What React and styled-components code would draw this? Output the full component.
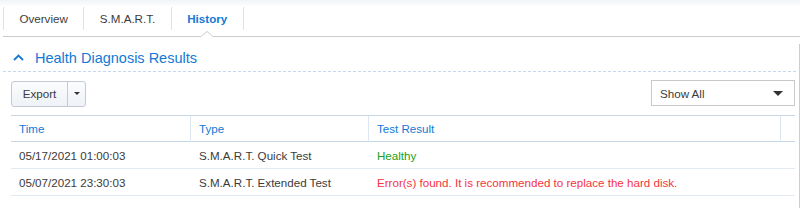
import React, { useState } from 'react'
import styled, { createGlobalStyle } from 'styled-components'

const GlobalStyle = createGlobalStyle`
  html, body {
    margin: 0;
    padding: 0;
    background: #fff;
  }
  body {
    font-family: "Liberation Sans", Arial, sans-serif;
    color: #3b3b3b;
  }
`

const BLUE = '#1379d4'

const Page = styled.div`
  width: 800px;
  height: 208px;
  overflow: hidden;
  background: linear-gradient(#f1f4f8 0, #fff 7px);
`

const TabBar = styled.div`
  display: flex;
  margin-left: 3px;
  padding: 7px 0 6px;
  border-bottom: 1px solid #cbcbcb;
`

const Tab = styled.div`
  position: relative;
  height: 23px;
  padding: 0 15.5px;
  display: flex;
  align-items: center;
  font-size: 11.6px;
  cursor: pointer;
  border-left: 1px solid #dde2e8;
  color: ${({ active }) => (active ? BLUE : '#3b3b3b')};
  font-weight: ${({ active }) => (active ? 'bold' : 'normal')};

  &:last-child {
    border-right: 1px solid #dde2e8;
  }

  ${({ active }) =>
    active &&
    `
    &::before {
      content: '';
      position: absolute;
      left: 50%;
      bottom: -7px;
      margin-left: -7px;
      border: 7px solid transparent;
      border-top: 0;
      border-bottom: 6px solid #cbcbcb;
    }
    &::after {
      content: '';
      position: absolute;
      left: 50%;
      bottom: -7px;
      margin-left: -6px;
      border: 6px solid transparent;
      border-top: 0;
      border-bottom: 5px solid #fff;
    }
  `}
`

const Panel = styled.div`
  margin: 7px 0 0 3px;
  border-right: 1px solid #cdcdcd;
  height: 200px;
`

const SectionHeader = styled.div`
  display: flex;
  align-items: center;
  gap: 11px;
  height: 27px;
  margin-right: 3px;
  padding-left: 10px;
  border-bottom: 1px dashed #c8d8ec;
  color: ${BLUE};
  font-size: 14.5px;
  cursor: pointer;
`

const Body = styled.div`
  padding: 0 4px 0 8px;
`

const Toolbar = styled.div`
  display: flex;
  align-items: center;
  justify-content: space-between;
  height: 43px;
`

const SplitButton = styled.div`
  display: flex;
  height: 26px;
  border: 1px solid #c3cad5;
  border-radius: 3px;
  box-sizing: border-box;
  background: linear-gradient(#fbfcfd, #eff2f6);
  overflow: hidden;
`

const ButtonPart = styled.button`
  border: none;
  background: none;
  font-family: inherit;
  font-size: 11.6px;
  color: #3b3b3b;
  padding: 0;
  width: ${({ w }) => w}px;
  display: flex;
  align-items: center;
  justify-content: center;
  cursor: pointer;

  & + & {
    border-left: 1px solid #c3cad5;
  }
`

const Caret = styled.span`
  width: 0;
  height: 0;
  border-left: ${({ size }) => size}px solid transparent;
  border-right: ${({ size }) => size}px solid transparent;
  border-top: ${({ size }) => size}px solid #333;
`

const Select = styled.div`
  width: 144px;
  height: 26px;
  box-sizing: border-box;
  border: 1px solid #c9c9c9;
  display: flex;
  align-items: center;
  justify-content: space-between;
  padding: 0 11px 0 8px;
  font-size: 11.6px;
  color: #3b3b3b;
  margin-top: -1px;
  cursor: pointer;
`

const Table = styled.div`
  display: grid;
  grid-template-columns: 180px 178px 1fr 14px;
  border-top: 1px solid #c9d6e5;
`

const HeadCell = styled.div`
  height: 25px;
  display: flex;
  align-items: center;
  padding-left: 8px;
  font-size: 11.6px;
  color: ${BLUE};
  border-bottom: 1px solid #c9d6e5;
  border-right: ${({ last }) => (last ? 'none' : '1px solid #dee7f1')};
`

const Cell = styled.div`
  height: 26px;
  display: flex;
  align-items: center;
  padding-left: 8px;
  font-size: 11.6px;
  white-space: nowrap;
  color: ${({ tone }) =>
    tone === 'ok' ? '#20a020' : tone === 'err' ? '#f3343f' : '#3b3b3b'};
  border-bottom: 1px solid #e4eaf1;
  grid-column: ${({ span }) => (span ? 'span 2' : 'auto')};
`

const rows = [
  { time: '05/17/2021 01:00:03', type: 'S.M.A.R.T. Quick Test', result: 'Healthy', tone: 'ok' },
  {
    time: '05/07/2021 23:30:03',
    type: 'S.M.A.R.T. Extended Test',
    result: 'Error(s) found. It is recommended to replace the hard disk.',
    tone: 'err',
  },
]

const tabs = ['Overview', 'S.M.A.R.T.', 'History']

export default function App() {
  const [active, setActive] = useState(2)

  return (
    <Page>
      <GlobalStyle />
      <TabBar>
        {tabs.map((t, i) => (
          <Tab key={t} active={i === active} onClick={() => setActive(i)}>
            {t}
          </Tab>
        ))}
      </TabBar>

      <Panel>
        <SectionHeader>
          <svg width="11" height="7" viewBox="0 0 11 7">
            <polyline points="1,6 5.5,1.5 10,6" fill="none" stroke={BLUE} strokeWidth="1.8" />
          </svg>
          Health Diagnosis Results
        </SectionHeader>

        <Body>
          <Toolbar>
            <SplitButton>
              <ButtonPart w={55}>Export</ButtonPart>
              <ButtonPart w={18}>
                <Caret size={3} />
              </ButtonPart>
            </SplitButton>
            <Select>
              Show All
              <Caret size={5} />
            </Select>
          </Toolbar>

          <Table>
            <HeadCell>Time</HeadCell>
            <HeadCell>Type</HeadCell>
            <HeadCell>Test Result</HeadCell>
            <HeadCell last />
            {rows.map((r) => (
              <React.Fragment key={r.time}>
                <Cell>{r.time}</Cell>
                <Cell>{r.type}</Cell>
                <Cell tone={r.tone} span>
                  {r.result}
                </Cell>
              </React.Fragment>
            ))}
          </Table>
        </Body>
      </Panel>
    </Page>
  )
}
